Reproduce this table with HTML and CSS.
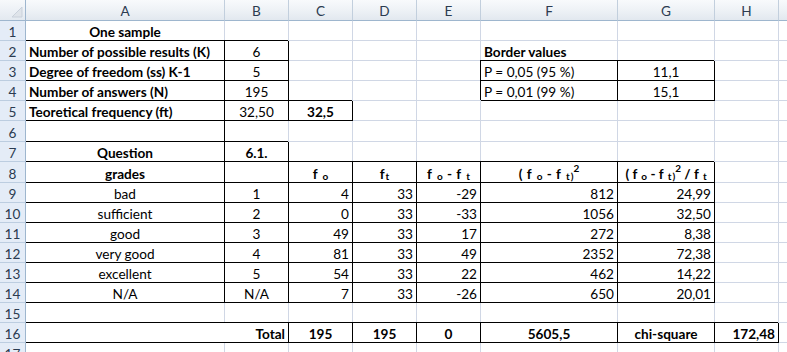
FILE: index.html
```html
<!DOCTYPE html>
<html lang="en">
<head>
<meta charset="utf-8">
<title>One sample chi-square</title>
<link rel="stylesheet" href="styles.css">
</head>
<body>
<div class="sheet">
  <div class="corner"><svg width="12" height="12" viewBox="0 0 12 12"><polygon points="11,1 11,11 1,11" fill="#dfe4ea" stroke="#c9d1db" stroke-width="1"/></svg></div>
  <div class="ch">A</div><div class="ch">B</div><div class="ch">C</div><div class="ch">D</div><div class="ch">E</div><div class="ch">F</div><div class="ch">G</div><div class="ch">H</div><div class="ch last"></div>

  <div class="rh">1</div>
  <div class="c bold ctr">One sample</div><div class="c"></div><div class="c"></div><div class="c"></div><div class="c"></div><div class="c"></div><div class="c"></div><div class="c"></div><div class="c last"></div>

  <div class="rh">2</div>
  <div class="c bold bdA">Number of possible results (K)</div><div class="c ctr bd">6</div><div class="c"></div><div class="c"></div><div class="c"></div><div class="c bold">Border values</div><div class="c"></div><div class="c"></div><div class="c last"></div>

  <div class="rh">3</div>
  <div class="c bold bdA">Degree of freedom (ss) K-1</div><div class="c ctr bd">5</div><div class="c"></div><div class="c"></div><div class="c"></div><div class="c bd">P = 0,05 (95 %)</div><div class="c ctr bd">11,1</div><div class="c"></div><div class="c last"></div>

  <div class="rh">4</div>
  <div class="c bold bdA">Number of answers (N)</div><div class="c ctr bd">195</div><div class="c"></div><div class="c"></div><div class="c"></div><div class="c bd">P = 0,01 (99 %)</div><div class="c ctr bd">15,1</div><div class="c"></div><div class="c last"></div>

  <div class="rh">5</div>
  <div class="c bold bdA">Teoretical frequency (ft)</div><div class="c ctr bd">32,50</div><div class="c bold ctr bd">32,5</div><div class="c"></div><div class="c"></div><div class="c"></div><div class="c"></div><div class="c"></div><div class="c last"></div>

  <div class="rh">6</div>
  <div class="c bdr"></div><div class="c"></div><div class="c"></div><div class="c"></div><div class="c"></div><div class="c"></div><div class="c"></div><div class="c"></div><div class="c last"></div>

  <div class="rh">7</div>
  <div class="c bold ctr bdA">Question</div><div class="c bold ctr bd">6.1.</div><div class="c"></div><div class="c"></div><div class="c"></div><div class="c"></div><div class="c"></div><div class="c"></div><div class="c last"></div>

  <div class="rh">8</div>
  <div class="c bold ctr bdA">grades</div><div class="c bd"></div>
  <div class="c bold ctr bd ws">f <span class="sb">o</span></div>
  <div class="c bold ctr bd">f<span class="sb">t</span></div>
  <div class="c bold ctr bd ws">f <span class="sb">o</span> - f <span class="sb">t</span></div>
  <div class="c bold ctr bd ws">( f <span class="sb">o</span> - f <span class="sb">t</span><span class="sb">)</span><span class="sp">2</span></div>
  <div class="c bold ctr bd">( f <span class="sb">o</span> - f <span class="sb">t</span><span class="sb">)</span><span class="sp">2</span> / f <span class="sb">t</span></div>
  <div class="c"></div><div class="c last"></div>

  <div class="rh">9</div>
  <div class="c ctr bdA">bad</div><div class="c ctr bd">1</div><div class="c rt bd">4</div><div class="c rt bd">33</div><div class="c rt bd">-29</div><div class="c rt bd">812</div><div class="c rt bd">24,99</div><div class="c"></div><div class="c last"></div>

  <div class="rh">10</div>
  <div class="c ctr bdA">sufficient</div><div class="c ctr bd">2</div><div class="c rt bd">0</div><div class="c rt bd">33</div><div class="c rt bd">-33</div><div class="c rt bd">1056</div><div class="c rt bd">32,50</div><div class="c"></div><div class="c last"></div>

  <div class="rh">11</div>
  <div class="c ctr bdA">good</div><div class="c ctr bd">3</div><div class="c rt bd">49</div><div class="c rt bd">33</div><div class="c rt bd">17</div><div class="c rt bd">272</div><div class="c rt bd">8,38</div><div class="c"></div><div class="c last"></div>

  <div class="rh">12</div>
  <div class="c ctr bdA">very good</div><div class="c ctr bd">4</div><div class="c rt bd">81</div><div class="c rt bd">33</div><div class="c rt bd">49</div><div class="c rt bd">2352</div><div class="c rt bd">72,38</div><div class="c"></div><div class="c last"></div>

  <div class="rh">13</div>
  <div class="c ctr bdA">excellent</div><div class="c ctr bd">5</div><div class="c rt bd">54</div><div class="c rt bd">33</div><div class="c rt bd">22</div><div class="c rt bd">462</div><div class="c rt bd">14,22</div><div class="c"></div><div class="c last"></div>

  <div class="rh">14</div>
  <div class="c ctr bdA">N/A</div><div class="c ctr bd">N/A</div><div class="c rt bd">7</div><div class="c rt bd">33</div><div class="c rt bd">-26</div><div class="c rt bd">650</div><div class="c rt bd">20,01</div><div class="c"></div><div class="c last"></div>

  <div class="rh">15</div>
  <div class="c"></div><div class="c"></div><div class="c"></div><div class="c"></div><div class="c"></div><div class="c"></div><div class="c"></div><div class="c"></div><div class="c last"></div>

  <div class="rh">16</div>
  <div class="c bold rt bdA span2">Total</div><div class="c bold ctr bd">195</div><div class="c bold ctr bd">195</div><div class="c bold ctr bd">0</div><div class="c bold ctr bd">5605,5</div><div class="c bold ctr bd">chi-square</div><div class="c bold rt bd">172,48</div><div class="c last"></div>

  <div class="rh">17</div>
  <div class="c"></div><div class="c"></div><div class="c"></div><div class="c"></div><div class="c"></div><div class="c"></div><div class="c"></div><div class="c"></div><div class="c last"></div>
</div>
</body>
</html>
```
FILE: styles.css
```css
html, body {
  margin: 0;
  padding: 0;
  background: #ffffff;
}

body {
  width: 787px;
  height: 352px;
  overflow: hidden;
  font-family: "Lato", "Liberation Sans", sans-serif;
  font-size: 13.6px;
  color: #000;
}

.sheet {
  display: grid;
  grid-template-columns: 26px 199px 64px 64px 64px 64px 137px 97px 64px 40px;
  grid-template-rows: 21px 20px 20px 20px 20px 20px 21px 20px 21px 20px 20px 20px 20px 20px 20px 20px 20px 20px;
}

.corner {
  background: linear-gradient(#f7f9fb, #e3e9f0);
  border-right: 1px solid #9eb6ce;
  border-bottom: 1px solid #9eb6ce;
  display: flex;
  align-items: flex-end;
  justify-content: flex-end;
  padding: 0 2px 2px 0;
}

.corner svg {
  display: block;
}

.ch {
  background: linear-gradient(#f8fafc 0%, #eef2f6 50%, #e2e8ef 100%);
  border-right: 1px solid #c2cfdd;
  border-bottom: 1px solid #9eb6ce;
  color: #2b3b50;
  display: flex;
  align-items: center;
  justify-content: center;
  padding-top: 1px;
}

.rh {
  background: #e4ecf7;
  border-right: 1px solid #9eb6ce;
  border-bottom: 1px solid #bccde0;
  color: #2b3b50;
  display: flex;
  align-items: flex-end;
  justify-content: center;
  line-height: 16px;
}

.c {
  border-right: 1px solid #d0d7e5;
  border-bottom: 1px solid #d0d7e5;
  display: flex;
  align-items: flex-end;
  padding: 0 3px;
  line-height: 16px;
  white-space: pre;
  min-width: 0;
}

.last {
  border-right: none;
}

.bold {
  font-weight: 700;
}

.ctr {
  justify-content: center;
}

.rt {
  justify-content: flex-end;
}

.ws {
  word-spacing: 1px;
}

.bd {
  border-right-color: #000;
  border-bottom-color: #000;
  box-shadow: -1px -1px 0 #000;
}

.bdA {
  border-right-color: #000;
  border-bottom-color: #000;
  box-shadow: 0 -1px 0 #000;
}

.bdr {
  border-right-color: #000;
}

.span2 {
  grid-column: span 2;
}

.sb {
  font-size: 10px;
  position: relative;
  top: 2px;
  margin-left: 1px;
}

.sp {
  font-size: 10px;
  position: relative;
  top: -6px;
}
```
